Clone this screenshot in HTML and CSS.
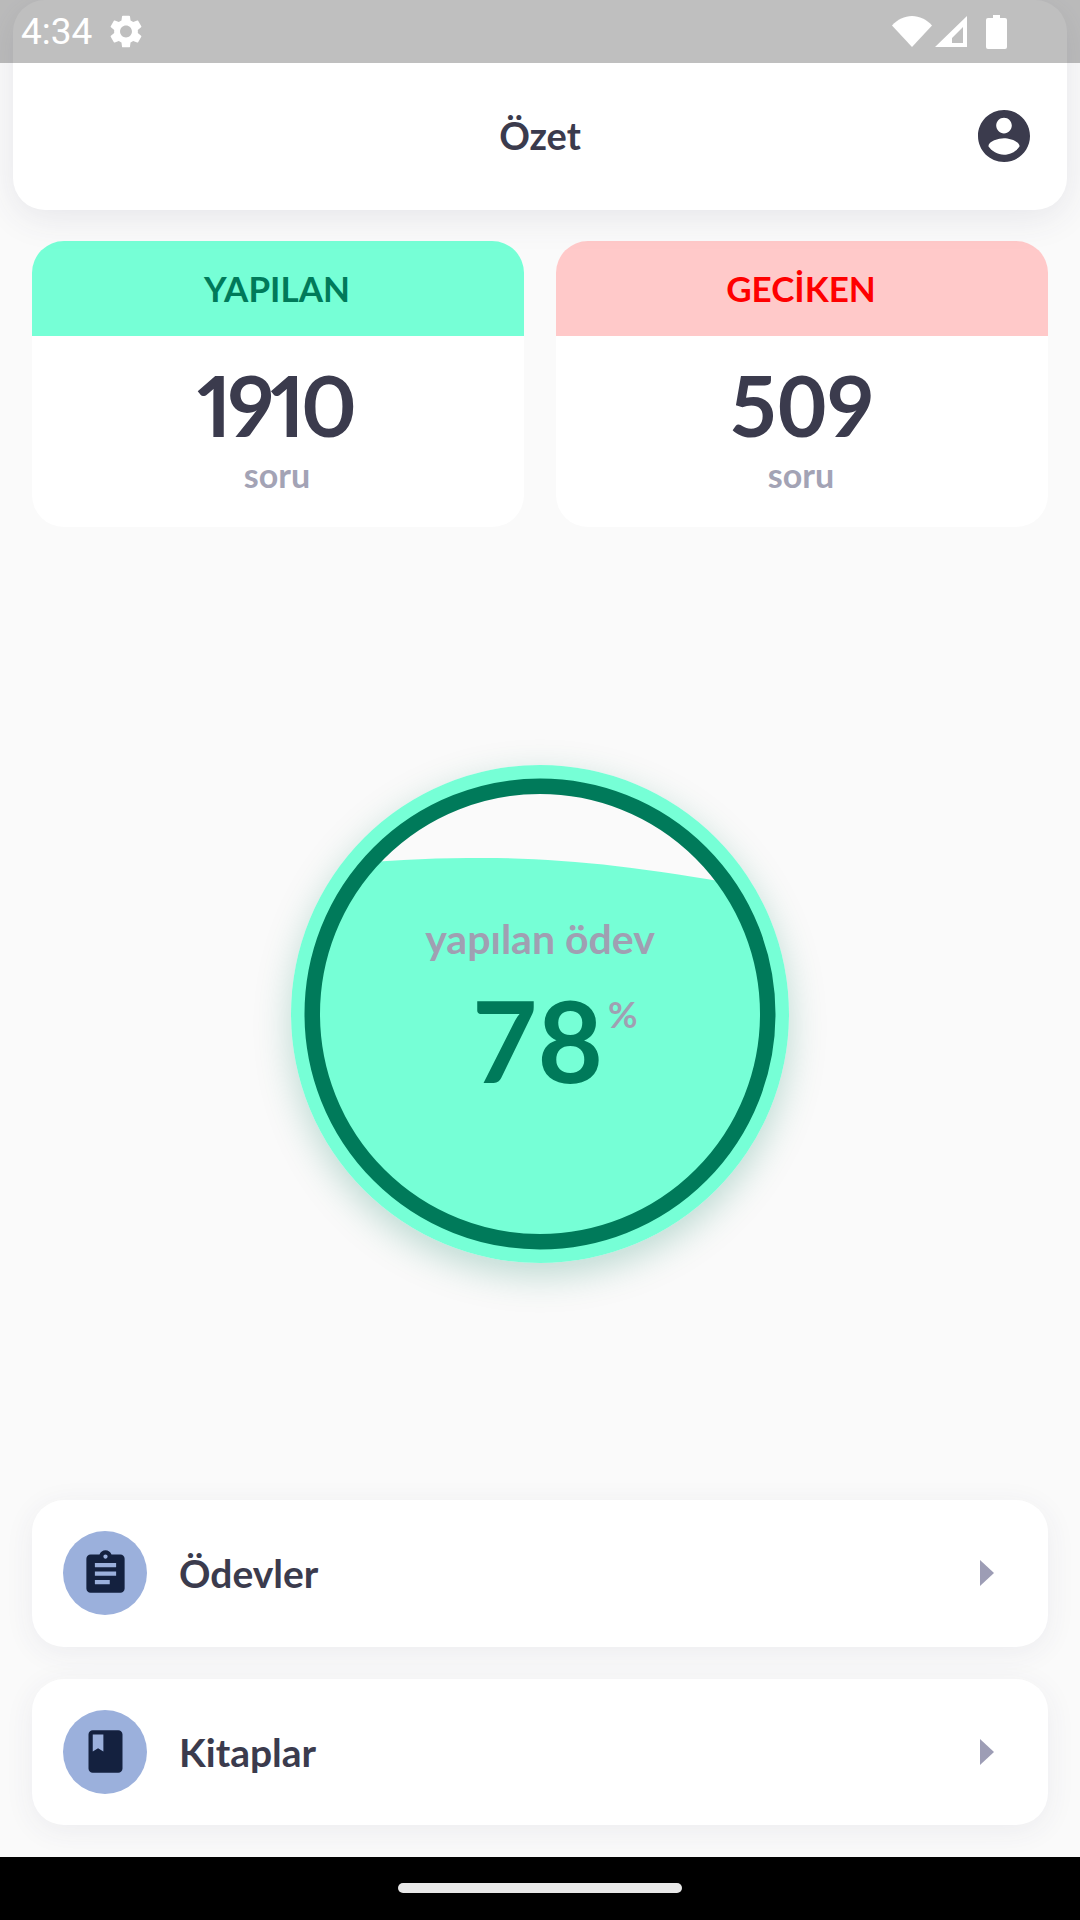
FILE: index.html
```html
<!DOCTYPE html>
<html lang="tr">
<head>
<meta charset="utf-8">
<title>Özet</title>
<link rel="stylesheet" href="styles.css">
</head>
<body>
<div class="app">
  <header class="topbar">
    <h1 class="topbar-title">Özet</h1>
    <svg class="account" viewBox="2 2 20 20"><path d="M12 2C6.48 2 2 6.48 2 12s4.48 10 10 10 10-4.48 10-10S17.52 2 12 2zm0 3c1.66 0 3 1.34 3 3s-1.34 3-3 3-3-1.34-3-3 1.34-3 3-3zm0 14.2c-2.5 0-4.71-1.28-6-3.22.03-1.99 4-3.08 6-3.08 1.99 0 5.97 1.09 6 3.08-1.29 1.94-3.5 3.22-6 3.22z"/></svg>
  </header>

  <section class="stats">
    <article class="stat">
      <div class="stat-head stat-head-done">YAPILAN</div>
      <div class="stat-value stat-value-tight">1910</div>
      <div class="stat-unit">soru</div>
    </article>
    <article class="stat">
      <div class="stat-head stat-head-late">GECİKEN</div>
      <div class="stat-value">509</div>
      <div class="stat-unit">soru</div>
    </article>
  </section>

  <section class="gauge-area">
    <div class="gauge">
      <svg class="gauge-svg" viewBox="0 0 498 498">
        <defs>
          <clipPath id="gauge-clip"><circle cx="249" cy="249" r="228"/></clipPath>
        </defs>
        <circle class="gauge-outer" cx="249" cy="249" r="249"/>
        <circle class="gauge-empty" cx="249" cy="249" r="228"/>
        <path class="gauge-water" clip-path="url(#gauge-clip)" d="M60 99C110 94 150 93 192 93C270 93 350 102 450 120L498 130V498H0V100Z"/>
        <circle class="gauge-ring" cx="249" cy="249" r="227.750"/>
      </svg>
      <div class="gauge-text">
        <div class="gauge-label">yapılan ödev</div>
        <div class="gauge-number">78<span class="gauge-percent">%</span></div>
      </div>
    </div>
  </section>

  <nav class="links">
    <a class="link">
      <span class="link-icon">
        <svg class="link-svg" viewBox="0 0 24 24"><path d="M19 3h-4.180C14.400 1.840 13.300 1 12 1c-1.300 0-2.400.840-2.820 2H5c-1.100 0-2 .900-2 2v14c0 1.100.900 2 2 2h14c1.100 0 2-.900 2-2V5c0-1.100-.900-2-2-2zm-7 0c.550 0 1 .450 1 1s-.450 1-1 1-1-.450-1-1 .450-1 1-1zm2 14H7v-2h7v2zm3-4H7v-2h10v2zm0-4H7V7h10v2z"/></svg>
      </span>
      <span class="link-label">Ödevler</span>
      <span class="chevron"></span>
    </a>
    <a class="link">
      <span class="link-icon">
        <svg class="link-svg" viewBox="0 0 24 24"><path d="M18 2H6c-1.100 0-2 .900-2 2v16c0 1.100.900 2 2 2h12c1.100 0 2-.900 2-2V4c0-1.100-.900-2-2-2zM6 4h5v8l-2.500-1.500L6 12V4z"/></svg>
      </span>
      <span class="link-label">Kitaplar</span>
      <span class="chevron"></span>
    </a>
  </nav>

  <div class="navbar"><span class="nav-pill"></span></div>

  <div class="statusbar">
    <span class="clock">4:34</span>
    <svg class="gear" viewBox="2.500 2 19 20"><path d="M19.140 12.940c.040-.300.060-.610.060-.940 0-.320-.020-.640-.070-.940l2.030-1.580c.180-.140.230-.410.120-.610l-1.920-3.320c-.120-.220-.370-.290-.590-.220l-2.390.960c-.500-.380-1.030-.700-1.620-.940l-.360-2.540c-.040-.240-.240-.410-.480-.410h-3.840c-.240 0-.430.170-.470.410l-.360 2.540c-.590.240-1.130.570-1.620.940l-2.390-.960c-.220-.080-.470 0-.590.220L2.740 8.870c-.120.210-.080.470.120.610l2.030 1.580c-.050.300-.090.630-.090.940s.020.640.070.940l-2.030 1.580c-.180.140-.230.410-.120.610l1.920 3.320c.120.220.370.290.590.220l2.390-.960c.500.380 1.030.700 1.620.940l.360 2.540c.050.240.240.410.480.410h3.840c.240 0 .440-.170.470-.410l.360-2.540c.590-.240 1.130-.560 1.620-.940l2.390.960c.220.080.470 0 .590-.220l1.920-3.320c.120-.220.070-.470-.120-.610l-2.010-1.580zM12 15.600c-1.980 0-3.600-1.620-3.600-3.600s1.620-3.600 3.600-3.600 3.600 1.620 3.600 3.600-1.620 3.600-3.600 3.600z"/></svg>
    <span class="status-spacer"></span>
    <svg class="wifi" viewBox="0 0 40 31"><path d="M0 9.500C5.500 3.500 12.500 0 20 0s14.500 3.500 20 9.500L20 31Z"/></svg>
    <svg class="signal" viewBox="0 0 32 31"><path fill-rule="evenodd" d="M32 0V31H0ZM28 11L17 22V27H28Z"/></svg>
    <svg class="battery" viewBox="0 0 21 34"><path d="M7 0h7v3h5q2 0 2 2v27q0 2-2 2H2q-2 0-2-2V5q0-2 2-2h5Z"/></svg>
  </div>
</div>
</body>
</html>
```

FILE: styles.css
```css
* { box-sizing: border-box; }
html, body { margin: 0; padding: 0; }
body { width: 1080px; height: 1920px; overflow: hidden; background: #fafafa; font-family: "Lato", "Noto Sans", sans-serif; color: #3b3b4d; }

.app { position: relative; width: 1080px; height: 1920px; display: flex; flex-direction: column; overflow: hidden; }

.topbar { flex: none; height: 210px; margin: 0 13px; padding: 59px 37px 0; background: #fff; border-radius: 32px; box-shadow: 0 8px 36px rgba(59, 59, 100, .1); display: flex; align-items: center; justify-content: center; position: relative; }
.topbar-title { margin: 0; font-size: 38px; font-weight: 700; line-height: 1; }
.account { width: 52px; height: 52px; fill: #3b3b4d; position: absolute; right: 37px; top: 110px; }

.stats { flex: none; margin-top: 31px; padding: 0 32px; display: flex; gap: 32px; }
.stat { flex: 1; height: 286px; background: #fff; border-radius: 32px; overflow: hidden; text-align: center; }
.stat-head { height: 95px; padding: 0 2px 2px 0; display: flex; align-items: center; justify-content: center; font-size: 35px; font-weight: 700; }
.stat-head-done { background: #76ffd6; color: #007a5a; }
.stat-head-late { background: #ffc9c9; color: #ff0000; }
.stat-value { margin-top: 23px; font-size: 84px; font-weight: 700; line-height: 92px; }
.stat-value-tight { font-variant-numeric: proportional-nums; letter-spacing: -4px; padding-right: 6px; }
.stat-unit { margin-top: 6px; padding-right: 2px; font-size: 34px; font-weight: 700; line-height: 36px; color: #a3a3b5; }

.gauge-area { flex: 1; display: flex; align-items: center; justify-content: center; min-height: 0; }
.gauge { position: relative; width: 498px; height: 498px; border-radius: 50%; box-shadow: 0 12px 36px rgba(0, 122, 90, .25); }
.gauge-svg { display: block; width: 498px; height: 498px; }
.gauge-outer { fill: #76ffd6; }
.gauge-empty { fill: #fafafa; }
.gauge-water { fill: #76ffd6; }
.gauge-ring { fill: none; stroke: #007a5a; stroke-width: 15.5; }
.gauge-text { position: absolute; inset: 0; display: flex; flex-direction: column; align-items: center; }
.gauge-label { margin-top: 152px; font-size: 41px; font-weight: 700; line-height: 44px; color: #a09fb2; }
.gauge-number { position: relative; margin: 18px 5px 0 0; font-size: 113px; font-weight: 700; line-height: 120px; color: #007a5a; }
.gauge-percent { position: absolute; left: 100%; top: 15px; margin-left: 5px; font-size: 36px; line-height: 40px; color: #a09fb2; }

.links { flex: none; padding: 0 32px; display: flex; flex-direction: column; gap: 32px; margin-bottom: 32px; }
.link { height: 146.5px; padding: 0 54px 0 31px; background: #fff; border-radius: 32px; display: flex; align-items: center; box-shadow: 0 6px 30px rgba(59, 59, 100, .07); }
.link-icon { flex: none; width: 84px; height: 84px; border-radius: 50%; background: #9bb0dc; display: flex; align-items: center; justify-content: center; }
.link-svg { width: 51px; height: 51px; fill: #14213f; }
.link-label { flex: 1; margin-left: 32px; font-size: 39px; font-weight: 700; }
.chevron { flex: none; width: 0; height: 0; border-style: solid; border-width: 13px 0 13px 14px; border-color: transparent transparent transparent #9d9db5; }

.navbar { flex: none; height: 63px; background: #000; display: flex; justify-content: center; padding-top: 26px; }
.nav-pill { width: 284px; height: 10px; border-radius: 5px; background: #e8e8e8; }

.statusbar { position: absolute; left: 0; top: 0; width: 1080px; height: 63px; padding: 0 0 0 21px; background: rgba(0, 0, 0, .25); display: flex; align-items: center; color: #fff; }
.clock { font-family: "Roboto", sans-serif; font-size: 37px; line-height: 1; width: 89px; }
.gear { width: 32px; height: 33px; fill: #fff; }
.status-spacer { flex: 1; }
.wifi { width: 40px; height: 31px; fill: #fff; }
.signal { width: 32px; height: 31px; fill: #fff; margin-left: 3px; }
.battery { width: 21px; height: 34px; fill: #fff; margin-left: 19px; margin-right: 73px; }
```
